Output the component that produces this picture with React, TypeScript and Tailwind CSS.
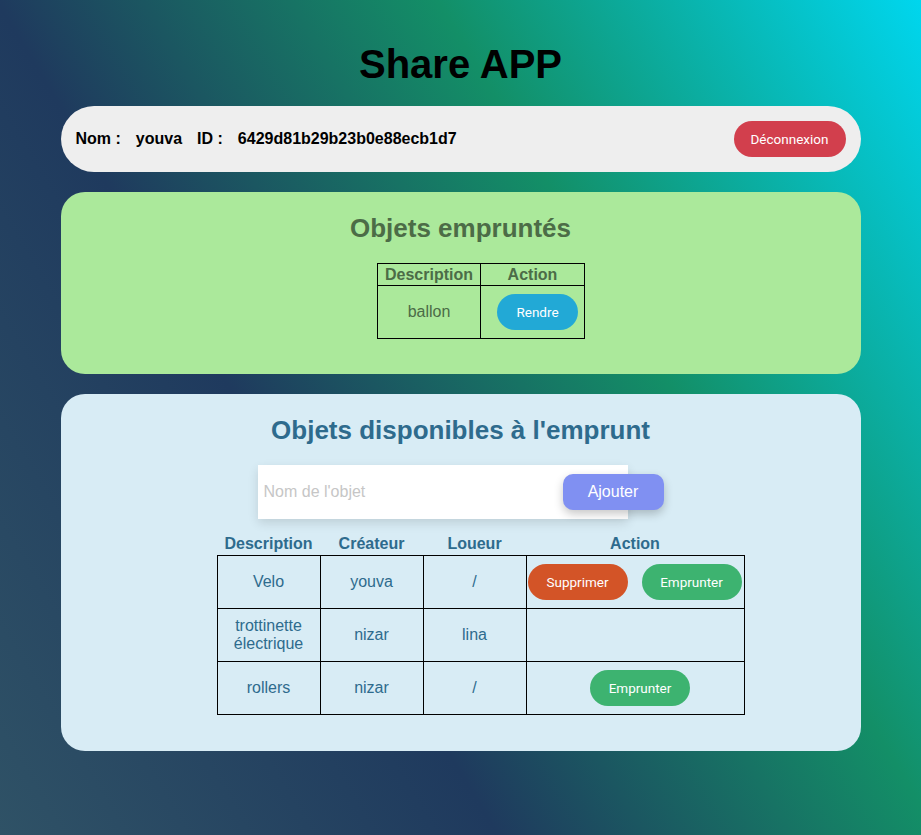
const borrowed = [{ description: "ballon" }];

type Item = {
  description: string;
  creator: string;
  renter: string;
  canDelete: boolean;
  canBorrow: boolean;
};

const items: Item[] = [
  { description: "Velo", creator: "youva", renter: "/", canDelete: true, canBorrow: true },
  { description: "trottinette électrique", creator: "nizar", renter: "lina", canDelete: false, canBorrow: false },
  { description: "rollers", creator: "nizar", renter: "/", canDelete: false, canBorrow: true },
];

const btnFont = "font-['Roboto',sans-serif] text-[13.5px] text-white";
const pill = `h-[36px] w-[100px] rounded-full ${btnFont}`;

export default function App() {
  return (
    <div className="min-h-screen bg-[linear-gradient(59deg,#2f5266_0%,#1f3a5e_35%,#138f67_66%,#00d6ee_100%)] font-['Liberation_Sans',Arial,sans-serif]">
      <div className="mx-auto w-[800px] pt-[41px] pb-[40px]">
        <h1 className="text-center text-[40px] leading-[46px] font-bold text-black">Share APP</h1>

        <div className="mt-[19px] flex h-[66px] items-center justify-between rounded-full bg-[#eeeeee] px-[15px]">
          <div className="flex gap-[15px] text-[16px] font-bold text-black">
            <span>Nom :</span>
            <span>youva</span>
            <span>ID :</span>
            <span>6429d81b29b23b0e88ecb1d7</span>
          </div>
          <button className={`h-[36px] w-[112px] rounded-full bg-[#d23f4d] ${btnFont}`}>Déconnexion</button>
        </div>

        <section className="mt-[20px] rounded-3xl bg-[#abe99b] pt-[21px] pb-[35px] text-[#4c6c47]">
          <h2 className="text-center text-[26px] leading-[30px] font-bold">Objets empruntés</h2>
          <div className="mt-[20px] pl-[41px]">
            <table className="mx-auto table-fixed border-collapse text-[16px] leading-[18px]">
              <colgroup>
                <col className="w-[103px]" />
                <col className="w-[104px]" />
              </colgroup>
              <thead>
                <tr className="h-[22px]">
                  <th className="border border-black p-0 font-bold">Description</th>
                  <th className="border border-black p-0 font-bold">Action</th>
                </tr>
              </thead>
              <tbody>
                {borrowed.map((b) => (
                  <tr key={b.description} className="h-[53px]">
                    <td className="border border-black p-0 text-center">{b.description}</td>
                    <td className="border border-black p-0">
                      <button className={`ml-[16px] h-[36px] w-[81px] rounded-full bg-[#22a9d6] ${btnFont}`}>
                        Rendre
                      </button>
                    </td>
                  </tr>
                ))}
              </tbody>
            </table>
          </div>
        </section>

        <section className="mt-[20px] rounded-3xl bg-[#d8ecf5] pt-[21px] pb-[36px] text-[#2e6b8d]">
          <h2 className="text-center text-[26px] leading-[30px] font-bold">Objets disponibles à l'emprunt</h2>

          <div className="mt-[20px] flex items-center justify-center">
            <input
              type="text"
              placeholder="Nom de l'objet"
              className="h-[54px] w-[370px] bg-white px-[6px] text-[16px] text-black shadow-[0_4px_10px_rgba(0,0,0,0.12)] outline-none placeholder:text-[#c6c6c6]"
            />
            <button className="relative z-10 ml-[-65px] h-[36px] w-[101px] rounded-[10px] bg-[#8090f2] text-[16px] text-white shadow-[0_4px_10px_rgba(0,0,0,0.22)]">
              Ajouter
            </button>
          </div>

          <div className="mt-[14px] pl-[40px]">
            <table className="mx-auto table-fixed border-collapse text-[16px] leading-[18px]">
              <colgroup>
                <col className="w-[103px]" />
                <col className="w-[103px]" />
                <col className="w-[103px]" />
                <col className="w-[218px]" />
              </colgroup>
              <thead>
                <tr className="h-[22px]">
                  <th className="p-0 font-bold">Description</th>
                  <th className="p-0 font-bold">Créateur</th>
                  <th className="p-0 font-bold">Loueur</th>
                  <th className="p-0 font-bold">Action</th>
                </tr>
              </thead>
              <tbody>
                {items.map((it) => (
                  <tr key={it.description} className="h-[53px]">
                    <td className="border border-black p-0 text-center">{it.description}</td>
                    <td className="border border-black p-0 text-center">{it.creator}</td>
                    <td className="border border-black p-0 text-center">{it.renter}</td>
                    <td className="border border-black p-0">
                      {it.canDelete ? (
                        <div className="flex gap-[14px] pl-[1px]">
                          <button className={`${pill} bg-[#d35427]`}>Supprimer</button>
                          <button className={`${pill} bg-[#3db370]`}>Emprunter</button>
                        </div>
                      ) : it.canBorrow ? (
                        <div className="flex justify-center pl-[10px]">
                          <button className={`${pill} bg-[#3db370]`}>Emprunter</button>
                        </div>
                      ) : null}
                    </td>
                  </tr>
                ))}
              </tbody>
            </table>
          </div>
        </section>
      </div>
    </div>
  );
}
